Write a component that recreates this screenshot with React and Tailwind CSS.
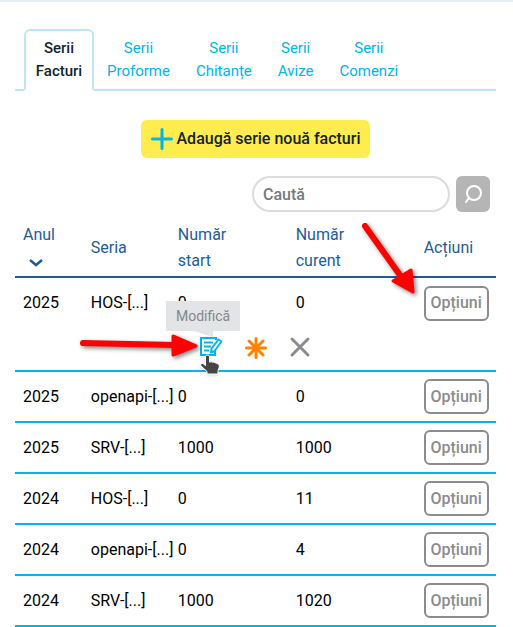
import React, { useState } from "react";

const tabs = ["Facturi", "Proforme", "Chitanțe", "Avize", "Comenzi"];

const rows = [
  { year: "2025", serie: "HOS-[...]", start: "0", current: "0" },
  { year: "2025", serie: "openapi-[...]", start: "0", current: "0" },
  { year: "2025", serie: "SRV-[...]", start: "1000", current: "1000" },
  { year: "2024", serie: "HOS-[...]", start: "0", current: "11" },
  { year: "2024", serie: "openapi-[...]", start: "0", current: "4" },
  { year: "2024", serie: "SRV-[...]", start: "1000", current: "1020" },
];

const EditIcon = () => (
  <svg width="24" height="22" viewBox="0 0 24 22" fill="none" stroke="#00b5e8" strokeWidth="2">
    <path d="M17 4V2H2v17h14v-4" />
    <path d="M5 6.500h9M5 10.500h7M5 14.500h5" strokeWidth="2" />
    <path d="M19.500 3.500l3 2-7 9.500-3.500 1.500.500-4z" fill="#fff" strokeWidth="2" strokeLinejoin="round" />
  </svg>
);

const StarIcon = () => (
  <svg width="24" height="24" viewBox="0 0 24 24" fill="none" stroke="#ff8200" strokeWidth="3" strokeLinecap="round">
    <path d="M12 2.500v19M2.500 12h19M5 5l14 14M19 5L5 19" />
  </svg>
);

const CloseIcon = () => (
  <svg width="22" height="22" viewBox="0 0 22 22" fill="none" stroke="#8b8b90" strokeWidth="3" strokeLinecap="round">
    <path d="M3 3l16 16M19 3L3 19" />
  </svg>
);

const HandIcon = () => (
  <svg width="22" height="22" viewBox="0 0 22 22" className="drop-shadow">
    <path
      d="M6.500 3c0-2.500 4-2.500 4 0v5c3-.500 6 .500 8.500 2 1 .500 1.500 1.500 1.300 3l-1.300 4v3H8v-2.500L2 12c-1-2 1-3.500 2.500-2L6.500 11.500z"
      fill="#454545"
      stroke="#fff"
    />
  </svg>
);

const OptionsButton = () => (
  <button
    type="button"
    className="h-[35px] w-[65px] rounded-md border-2 border-[#8b8b90] text-center font-medium text-[#8b8b90]"
  >
    Opțiuni
  </button>
);

const RowActions = () => (
  <div className="flex h-[42px] items-start justify-center gap-[21px] pt-2 pr-[1px]">
    <div className="relative">
      <button type="button" aria-label="Modifică" className="block">
        <EditIcon />
      </button>
      <div
        role="tooltip"
        className="absolute bottom-full left-[-33px] mb-[5px] bg-[#e2e4e6] px-[10px] py-[3px] text-sm leading-6 text-[#85878a]"
      >
        Modifică
        <svg width="20" height="6" className="absolute top-full left-[28px]">
          <path d="M0 0h19v6z" fill="#e2e4e6" />
        </svg>
      </div>
      <svg width="124" height="30" className="absolute top-[-4px] right-[24px] drop-shadow-[2px_2px_2px_rgba(0,0,0,0.5)]">
        <path d="M8 11L100 13" stroke="#f00" strokeWidth="6" strokeLinecap="round" />
        <path d="M98 4l23 10-23 9z" fill="#f00" stroke="#f00" strokeWidth="3" strokeLinejoin="round" />
      </svg>
      <div className="absolute top-[18px] left-0">
        <HandIcon />
      </div>
    </div>
    <button type="button" aria-label="Setează implicită">
      <StarIcon />
    </button>
    <button type="button" aria-label="Șterge">
      <CloseIcon />
    </button>
  </div>
);

const App = () => {
  const [activeTab, setActiveTab] = useState("Facturi");
  const [search, setSearch] = useState("");

  return (
    <div className="border-t-2 border-[#e5f0f3] bg-white pr-[17px] pl-[15px] font-['Roboto',sans-serif] text-base text-black">
      <nav className="mt-[27px] flex border-b-2 border-[#c0e5f4] pl-[9px]">
        {tabs.map((tab) => (
          <button
            key={tab}
            type="button"
            onClick={() => setActiveTab(tab)}
            className={`-mb-[2px] border-2 py-[6px] text-center text-[15px] leading-[23px] ${
              activeTab === tab
                ? "w-[70px] rounded-t-md border-[#c0e5f4] border-b-white font-medium text-[#12232e]"
                : "border-transparent px-[11px] font-normal text-[#00b5e8]"
            }`}
          >
            Serii
            <br />
            {tab}
          </button>
        ))}
      </nav>

      <div className="mt-[29px] flex justify-center">
        <button
          type="button"
          className="flex h-[38px] items-center gap-1 rounded-md bg-[#ffec4f] px-[10px] font-medium text-[#12232e]"
        >
          <svg width="22" height="22" viewBox="0 0 22 22" stroke="#00b5e8" strokeWidth="3" strokeLinecap="round">
            <path d="M11 1.500v19M1.500 11h19" />
          </svg>
          Adaugă serie nouă facturi
        </button>
      </div>

      <form className="mt-[18px] flex justify-end gap-[6px] pr-[6px]" onSubmit={(e) => e.preventDefault()}>
        <input
          type="text"
          aria-label="Caută"
          placeholder="Caută"
          value={search}
          onChange={(e) => setSearch(e.target.value)}
          className="h-9 w-[198px] rounded-full border-2 border-[#dcdcdc] px-[9px] font-medium placeholder:text-[#77797c] focus:outline-none"
        />
        <button
          type="submit"
          aria-label="Caută serie"
          className="flex h-9 w-[34px] items-center justify-center rounded-md bg-[#b5b5b5]"
        >
          <svg width="20" height="20" viewBox="0 0 20 20" fill="none" stroke="#fff" strokeWidth="2" strokeLinecap="round">
            <circle cx="11" cy="9" r="7" />
            <path d="M6 14l-3 4" />
          </svg>
        </button>
      </form>

      <table className="mt-[10px] w-full table-fixed border-collapse text-left whitespace-nowrap">
        <thead className="text-[#1f5c99]">
          <tr className="h-[55px] border-b-2 border-[#1f5c99] leading-[26px]">
            <th className="w-[14.1%] pb-[2px] pl-2 font-normal">
              <span className="block">Anul</span>
              <svg width="26" height="26" viewBox="0 0 26 26" fill="none" stroke="#1f5c99" strokeWidth="2.500">
                <path d="M7 12l6 5 6-5" />
              </svg>
            </th>
            <th className="w-[18.1%] pb-[2px] pl-2 font-normal">Seria</th>
            <th className="w-[24.5%] pb-[2px] pl-2 font-normal">
              Număr
              <br />
              start
            </th>
            <th className="w-[26.6%] pb-[2px] pl-2 font-normal">
              Număr
              <br />
              curent
            </th>
            <th className="pb-[2px] pl-2 font-normal">Acțiuni</th>
          </tr>
        </thead>
        <tbody>
          {rows.map((row, index) => (
            <React.Fragment key={index}>
              <tr className={`h-[51px] ${index > 0 ? "border-b-2 border-[#00b5e8]" : ""}`}>
                <td className="pl-2">{row.year}</td>
                <td className="pl-2">{row.serie}</td>
                <td className="pl-2">{row.start}</td>
                <td className="pl-2">{row.current}</td>
                <td className="relative pl-2">
                  <OptionsButton />
                  {index === 0 && (
                    <svg
                      width="62"
                      height="82"
                      className="absolute top-[-58px] left-[-58px] drop-shadow-[2px_2px_2px_rgba(0,0,0,0.5)]"
                    >
                      <path d="M7 6L44 58" stroke="#f00" strokeWidth="6" strokeLinecap="round" />
                      <path d="M53 50l2 22-20-11z" fill="#f00" stroke="#f00" strokeWidth="3" strokeLinejoin="round" />
                    </svg>
                  )}
                </td>
              </tr>
              {index === 0 && (
                <tr className="border-b-2 border-[#00b5e8]">
                  <td colSpan={5}>
                    <RowActions />
                  </td>
                </tr>
              )}
            </React.Fragment>
          ))}
        </tbody>
      </table>
    </div>
  );
};

export default App;
